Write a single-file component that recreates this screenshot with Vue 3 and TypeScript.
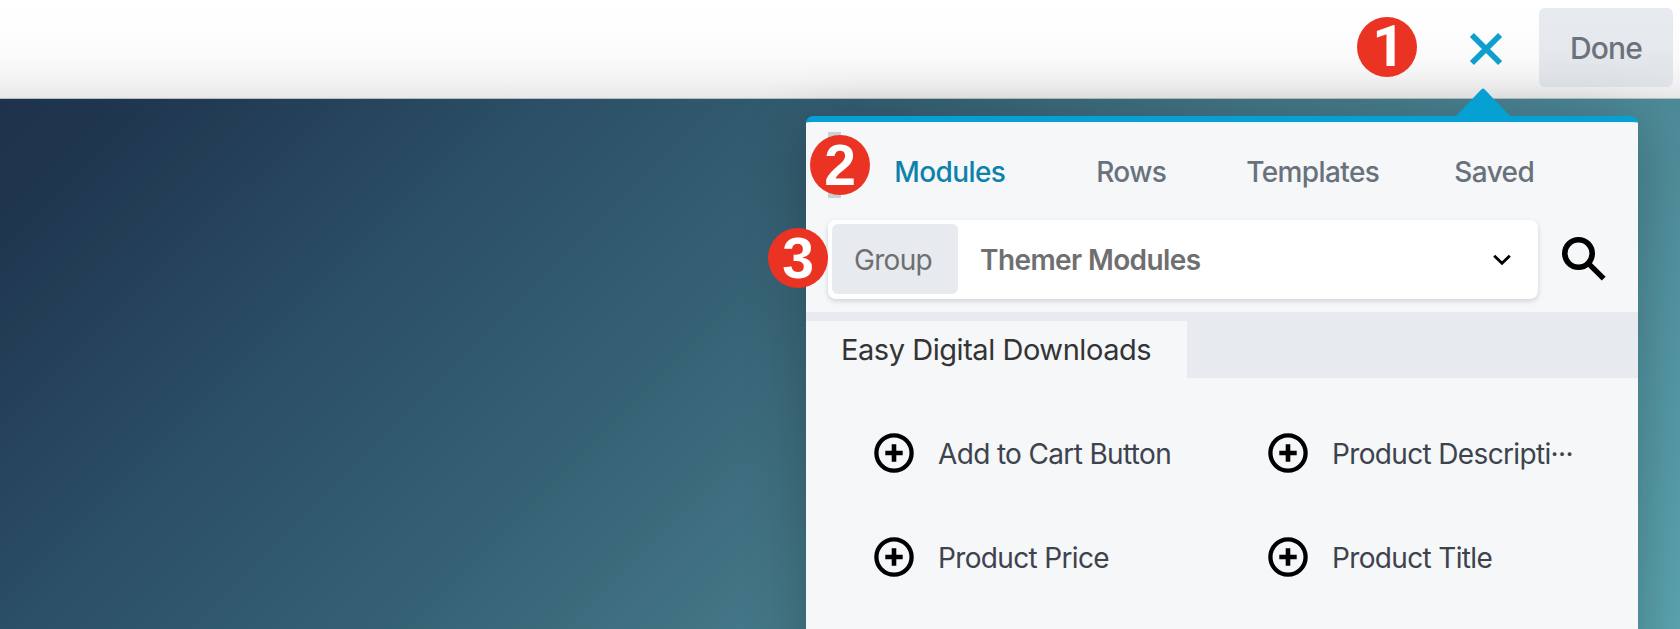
<script setup lang="ts">
import { ref } from 'vue'

interface Marker {
  label: string
  place: string
}

const tabs: string[] = ['Modules', 'Rows', 'Templates', 'Saved']
const activeTab = ref<string>('Modules')

const modules: string[] = [
  'Add to Cart Button',
  'Product Descripti···',
  'Product Price',
  'Product Title',
]

const markers: Marker[] = [
  { label: '1', place: 'at-close' },
  { label: '2', place: 'at-tabs' },
  { label: '3', place: 'at-group' },
]
</script>

<template>
  <div class="builder">
    <header class="bar">
      <button class="close" type="button" aria-label="Close">
        <svg width="34" height="34" viewBox="0 0 34 34">
          <path d="M2.9 2.9 31.1 31.1M31.1 2.9 2.9 31.1" fill="none" stroke="#0f9fce" stroke-width="5.7" />
        </svg>
      </button>
      <button class="done" type="button">Done</button>
    </header>

    <main class="canvas">
      <section class="panel">
        <svg class="pointer" width="54" height="28" viewBox="0 0 54 28">
          <path d="M0 28 25.5 1.2Q27 -.4 28.5 1.2L54 28Z" fill="#06a0d3" />
        </svg>
        <span class="grip"></span>

        <nav class="tabs">
          <button
            v-for="tab in tabs"
            :key="tab"
            type="button"
            class="tab"
            :class="{ active: tab === activeTab }"
            @click="activeTab = tab"
          >
            {{ tab }}
          </button>
        </nav>

        <div class="filter">
          <div class="select">
            <span class="group">Group</span>
            <span class="value">Themer Modules</span>
            <svg class="chevron" width="18" height="12" viewBox="0 0 18 12">
              <path d="M1.2 1.7 9 9.3 16.8 1.7" fill="none" stroke="#000" stroke-width="2.8" />
            </svg>
          </div>
          <svg class="search" width="46" height="46" viewBox="0 0 46 46">
            <circle cx="17.5" cy="17.5" r="13.7" fill="none" stroke="#000" stroke-width="5.6" />
            <path d="M28.6 28.6 42.7 42.7" fill="none" stroke="#000" stroke-width="5.4" />
          </svg>
        </div>

        <div class="strip">
          <h2 class="category">Easy Digital Downloads</h2>
        </div>

        <ul class="modules">
          <li v-for="name in modules" :key="name" class="module">
            <svg class="plus" width="40" height="40" viewBox="0 0 40 40">
              <circle cx="20" cy="20" r="17.6" fill="none" stroke="#000" stroke-width="4.3" />
              <path d="M11.3 20H28.7M20 11.3V28.7" fill="none" stroke="#000" stroke-width="4.6" />
            </svg>
            <span class="name">{{ name }}</span>
          </li>
        </ul>
      </section>
    </main>

    <span v-for="m in markers" :key="m.label" class="marker" :class="m.place">{{ m.label }}</span>
  </div>
</template>

<style>
body {
  margin: 0;
  overflow: hidden;
}
</style>

<style scoped>
.builder {
  position: relative;
  display: flex;
  flex-direction: column;
  width: 1680px;
  height: 629px;
  overflow: hidden;
  font-family: Inter, "Liberation Sans", sans-serif;
  font-size: 28px;
  letter-spacing: -0.6px;
}

button {
  margin: 0;
  padding: 0;
  border: 0;
  background: none;
  font: inherit;
  letter-spacing: inherit;
}

.bar {
  display: flex;
  flex: none;
  box-sizing: border-box;
  height: 99px;
  padding: 8px 7px 0 0;
  justify-content: flex-end;
  align-items: flex-start;
  border-bottom: 1px solid #b5bdc1;
  background: linear-gradient(#fff 0%, #fefefe 25%, #fafafa 60%, #f3f3f3 82%, #e8e8e9 100%);
}

.close {
  display: flex;
  height: 79px;
  padding: 3px 36px 0 0;
  align-items: center;
}

.done {
  box-sizing: border-box;
  width: 134px;
  height: 79px;
  padding-top: 1px;
  border-radius: 6px;
  background: linear-gradient(#e7eaef, #e5e8ed 50%, #dee1e6);
  color: #6b727c;
  font-size: 30px;
  font-weight: 500;
  letter-spacing: -0.8px;
}

.canvas {
  display: flex;
  flex: 1;
  box-sizing: border-box;
  padding: 17px 42px 0 0;
  justify-content: flex-end;
  background: linear-gradient(135deg, #1e324b 0%, #203750 7%, #2b4f66 24%, #356073 40%, #437686 56%, #5ca6b1 100%);
}

.panel {
  position: relative;
  box-sizing: border-box;
  width: 832px;
  height: 560px;
  border-top: 6px solid #06a0d3;
  border-radius: 7px 7px 0 0;
  background: #f5f7f9;
  box-shadow: 0 10px 60px rgba(0, 0, 0, 0.25);
}

.pointer {
  position: absolute;
  top: -34px;
  left: 650px;
}

.grip {
  position: absolute;
  top: 10px;
  left: 22px;
  width: 13px;
  height: 66px;
  background: #c9d1d6;
}

.tabs {
  display: grid;
  grid-template-columns: repeat(4, 181.5px);
  height: 98px;
  padding-left: 53px;
}

.tab {
  padding-top: 2px;
  color: #69717c;
  font-weight: 500;
}

.tab.active {
  color: #0e82ab;
}

.filter {
  display: flex;
  height: 92px;
  padding-left: 22px;
}

.select {
  display: flex;
  box-sizing: border-box;
  width: 710px;
  height: 79px;
  padding: 0 27px 1px 4px;
  align-items: center;
  border-radius: 8px;
  background: #fff;
  box-shadow: 0 2px 5px rgba(40, 50, 60, 0.18);
  color: #6f6f70;
}

.group {
  display: flex;
  box-sizing: border-box;
  width: 126px;
  height: 70px;
  padding: 2px 4px 0 0;
  justify-content: center;
  align-items: center;
  border-radius: 6px;
  background: #e7eaee;
  letter-spacing: -0.7px;
}

.value {
  margin-left: 22px;
  padding-top: 2px;
  font-weight: 600;
}

.chevron {
  margin: 1px 0 0 auto;
}

.search {
  margin: 16px 0 0 23px;
}

.strip {
  box-sizing: border-box;
  height: 66px;
  padding-top: 9px;
  background: #e7eaee;
}

.category {
  display: flex;
  box-sizing: border-box;
  width: 381px;
  height: 57px;
  margin: 0;
  padding: 0 0 1px 35px;
  align-items: center;
  background: #f5f7f9;
  color: #343434;
  font-size: 29px;
  font-weight: 400;
  letter-spacing: -0.45px;
  white-space: nowrap;
}

.modules {
  display: grid;
  grid-template-columns: repeat(2, 394px);
  grid-auto-rows: 103.7px;
  margin: 0;
  padding: 23.5px 0 0 67.5px;
  list-style: none;
}

.module {
  display: flex;
  align-items: center;
}

.name {
  margin-left: 24.5px;
  padding-top: 2px;
  color: #3d434d;
  letter-spacing: -0.65px;
  white-space: nowrap;
}

.marker {
  position: absolute;
  display: flex;
  width: 60px;
  height: 60px;
  justify-content: center;
  align-items: center;
  border-radius: 50%;
  background: #eb3323;
  color: #fff;
  font-family: "Liberation Sans", sans-serif;
  font-size: 57px;
  font-weight: 700;
  letter-spacing: 0;
  line-height: 60px;
}

.at-close {
  box-sizing: border-box;
  top: 17px;
  left: 1357px;
  padding-left: 3px;
  font-family: Roboto, sans-serif;
}

.at-tabs {
  top: 135px;
  left: 810px;
}

.at-group {
  top: 228px;
  left: 768px;
}
</style>
